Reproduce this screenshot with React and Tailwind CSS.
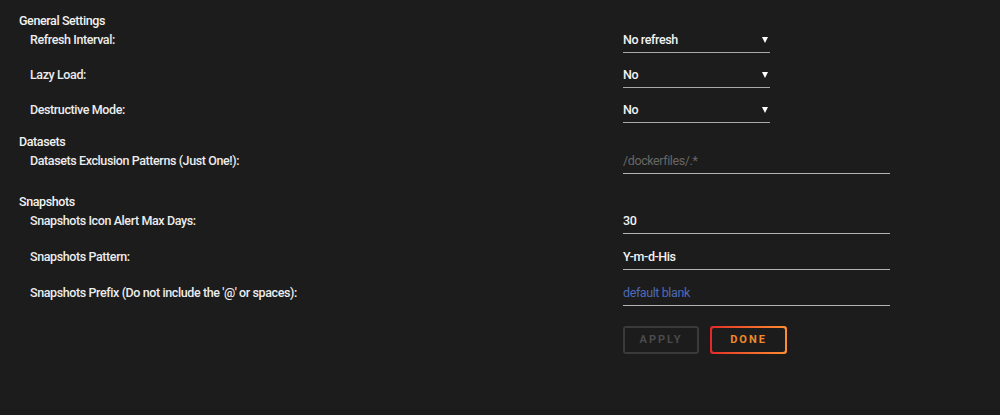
import React from "react";

const font = { fontFamily: "Roboto, 'Noto Sans', sans-serif" };

const SelectField = ({ value }) => (
  <div className="w-[147px] h-[23px] border-b border-[#a9a9a9] flex items-start justify-between">
    <span className="leading-[19px] text-[#f2f2f2]">{value}</span>
    <span className="mt-[7px] mr-[2px] w-0 h-0 border-l-[3px] border-r-[3px] border-t-[6px] border-l-transparent border-r-transparent border-t-white" />
  </div>
);

const TextField = ({ value, placeholder, tone = "text-[#f2f2f2]" }) => (
  <div className="w-[267px] h-[23px] border-b border-[#b4b4b4]">
    <span className={`leading-[19px] ${value ? tone : placeholder.tone}`}>
      {value || placeholder.text}
    </span>
  </div>
);

const Row = ({ label, height, children }) => (
  <div className={`flex items-start ${height}`}>
    <div className="w-[604px] pl-[11px] leading-[19px] text-[#ececec]">{label}</div>
    {children}
  </div>
);

const Heading = ({ children, className = "" }) => (
  <div className={`h-[19px] leading-[19px] text-[#f2f2f2] ${className}`}>{children}</div>
);

export default function App() {
  return (
    <div
      className="w-[1000px] h-[415px] bg-[#1c1c1c] text-[12.5px] font-medium tracking-[-0.4px] pl-[19px] pt-[11px]"
      style={font}
    >
      <Heading>General Settings</Heading>
      <Row label="Refresh Interval:" height="h-[35px]">
        <SelectField value="No refresh" />
      </Row>
      <Row label="Lazy Load:" height="h-[35px]">
        <SelectField value="No" />
      </Row>
      <Row label="Destructive Mode:" height="h-[35px]">
        <SelectField value="No" />
      </Row>

      <Heading className="-mt-[3px]">Datasets</Heading>
      <Row label="Datasets Exclusion Patterns (Just One!):" height="h-[35px]">
        <TextField placeholder={{ text: "/dockerfiles/.*", tone: "text-[#676767] font-normal" }} />
      </Row>

      <Heading className="mt-[6px]">Snapshots</Heading>
      <Row label="Snapshots Icon Alert Max Days:" height="h-[36px]">
        <TextField value="30" />
      </Row>
      <Row label="Snapshots Pattern:" height="h-[36px]">
        <TextField value="Y-m-d-His" />
      </Row>
      <Row label="Snapshots Prefix (Do not include the '@' or spaces):" height="h-[36px]">
        <TextField placeholder={{ text: "default blank", tone: "text-[#4d6bb7] font-normal" }} />
      </Row>

      <div className="flex gap-[11px] ml-[604px] mt-[7px]">
        <button
          disabled
          className="w-[76px] h-[28px] rounded-[3px] border-2 border-[#3a3a3a] text-[11px] font-bold tracking-[2px] text-[#4a4a4a]"
        >
          APPLY
        </button>
        <div className="w-[77px] h-[28px] rounded-[3px] p-[2px] bg-gradient-to-r from-[#e22828] to-[#ff8c2f]">
          <button className="w-full h-full rounded-[2px] bg-[#1c1c1c] text-[11px] font-bold tracking-[2px] text-[#f0892d]">
            DONE
          </button>
        </div>
      </div>
    </div>
  );
}
